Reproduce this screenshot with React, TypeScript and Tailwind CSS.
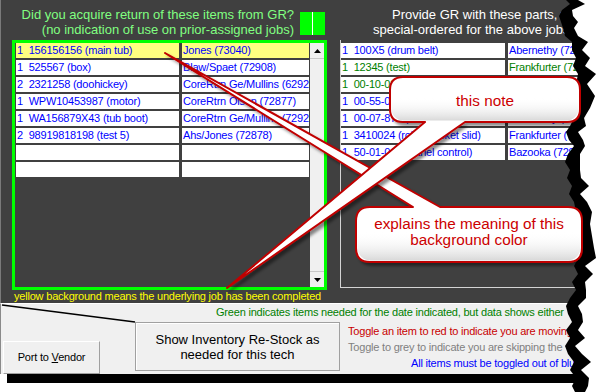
import React from "react";

const F = { fontFamily: '"Liberation Sans", Arial, sans-serif' };

type Row = { a: string; b: string; c?: string; y?: boolean };

const leftRows: Row[] = [
  { a: "1  156156156 (main tub)", b: "Jones (73040)", y: true },
  { a: "1  525567 (box)", b: "Blaw/Spaet (72908)" },
  { a: "2  2321258 (doohickey)", b: "CoreRtrn Ge/Mullins (62921)" },
  { a: "1  WPW10453987 (motor)", b: "CoreRtrn Olson (72877)" },
  { a: "1  WA156879X43 (tub boot)", b: "CoreRtrn Ge/Mullins (72921)" },
  { a: "2  98919818198 (test 5)", b: "Ahs/Jones (72878)" },
  { a: "", b: "" },
  { a: "", b: "" },
];

const BLUE = "text-[#0000ff]";
const GREEN = "text-[#008000]";

const rightRows: Row[] = [
  { a: "1  100X5 (drum belt)", b: "Abernethy (72915)", c: BLUE },
  { a: "1  12345 (test)", b: "Frankfurter (72880)", c: GREEN },
  { a: "1  00-10-022 (hinge)", b: "Frankfurter (72880)", c: GREEN },
  { a: "1  00-55-019 (spring)", b: "Abernethy (72915)", c: BLUE },
  { a: "1  00-07-875 (seal)", b: "Abernethy (72915)", c: BLUE },
  { a: "1  3410024 (roller basket slid)", b: "Frankfurter (72880)", c: BLUE },
  { a: "1  50-01-010 (panel control)", b: "Bazooka (72901)", c: BLUE },
];

const E: [number, number][] = [
  [566, 0], [570, 4], [562, 10], [559, 16], [561, 22], [563, 28], [565, 36], [572, 42],
  [572, 50], [576, 58], [573, 66], [578, 74], [576, 84], [580, 96], [577, 108], [574, 118],
  [570, 126], [566, 132], [569, 140], [574, 146], [568, 154], [565, 162], [570, 170],
  [567, 178], [572, 186], [569, 194], [574, 202], [576, 212], [580, 224], [578, 236],
  [582, 248], [578, 258], [574, 266], [578, 274], [572, 282], [576, 290], [570, 298],
  [566, 306], [568, 314], [572, 322], [566, 330], [570, 338], [565, 346], [568, 354],
  [574, 362], [570, 370], [576, 378], [572, 386], [575, 392],
];
const W = [12, 15, 10, 14, 17, 11, 13, 16, 10, 14, 12, 18, 11, 15, 13, 10, 16, 12, 14, 11];

const blackPath =
  "M " + E.map(([x, y]) => `${x},${y}`).join(" L ") + " L 600,392 L 600,0 Z";
const whitePath =
  "M " +
  E.map(([x, y], i) => `${x + W[i % W.length]},${y}`).join(" L ") +
  " L 600,392 L 600,0 Z";

const c1 =
  "M 403,77 H 567 Q 580,77 580,90 V 109 Q 580,122 567,122 H 465 L 227,288 L 425,122 H 403 Q 390,122 390,109 V 90 Q 390,77 403,77 Z";
const c2 =
  "M 370,207 H 413 L 165,53 L 440,207 H 568 Q 582,207 582,221 V 248 Q 582,262 568,262 H 370 Q 356,262 356,248 V 221 Q 356,207 370,207 Z";

function Cell({ text, cls, yellow }: { text: string; cls: string; yellow?: boolean }) {
  return (
    <div
      className={
        (yellow ? "bg-[#ffff80] " : "bg-white ") +
        cls +
        " h-[15px] overflow-hidden whitespace-pre pl-[1px] text-[11px] leading-[15px] tracking-[-0.2px]"
      }
    >
      {text}
    </div>
  );
}

export default function App() {
  return (
    <div className="relative h-[392px] w-[600px] overflow-hidden bg-white" style={F}>
      <div className="flex h-[374px] w-[600px] flex-col">
        {/* dark panel */}
        <div className="flex h-[303px] border-l border-[#7a7a7a] bg-[#404040]">
          {/* left side */}
          <div className="flex w-[330px] shrink-0 flex-col">
            <div className="flex h-[40px] justify-end pr-[6px]">
              <div className="whitespace-nowrap pt-[7px] text-right text-[13px] leading-[15px] text-[#80ff80]">
                <div>Did you acquire return of these items from GR?</div>
                <div>(no indication of use on prior-assigned jobs)</div>
              </div>
              <div className="ml-[6px] mt-[12px] flex h-[23px] w-[25px]">
                <div className="w-[12px] bg-[#00ff00]" />
                <div className="w-[1px] bg-white" />
                <div className="w-[12px] bg-[#00ff00]" />
              </div>
            </div>
            <div className="ml-[11px] flex h-[250px] w-[315px] border-[3px] border-[#00ff00] pl-[1px]">
              <div className="grid w-[293px] grid-cols-[163px_127px] content-start gap-x-[3px] gap-y-[2px]">
                {leftRows.map((r, i) => (
                  <React.Fragment key={i}>
                    <Cell text={r.a} cls={BLUE} yellow={r.y} />
                    <Cell text={r.b} cls={BLUE} yellow={r.y} />
                  </React.Fragment>
                ))}
              </div>
              <div className="ml-[1px] flex w-[14px] flex-col bg-[#f0f0f0]">
                <div className="flex h-[16px] items-center justify-center border-b border-[#c8c8c8]">
                  <svg width="7" height="4" viewBox="0 0 7 4">
                    <polygon points="0,4 7,4 3.5,0" fill="#000" />
                  </svg>
                </div>
                <div className="flex-1" />
                <div className="flex h-[16px] items-center justify-center border-t border-[#c8c8c8]">
                  <svg width="7" height="4" viewBox="0 0 7 4">
                    <polygon points="0,0 7,0 3.5,4" fill="#000" />
                  </svg>
                </div>
              </div>
            </div>
            <div className="ml-[13px] whitespace-nowrap text-[11px] leading-[12px] tracking-[-0.2px] text-[#ffff00]">
              yellow background means the underlying job has been completed
            </div>
          </div>
          {/* right side */}
          <div className="flex min-w-0 flex-1 flex-col overflow-hidden">
            <div className="h-[40px] whitespace-nowrap pt-[7px] text-[13px] leading-[15px] text-white">
              <div className="pl-[61px]">Provide GR with these parts, which were</div>
              <div className="pl-[42px]">special-ordered for the above jobs</div>
            </div>
            <div className="ml-[9px] h-[248px] overflow-hidden border-b border-l border-[#d4d4d4] pt-[3px]">
              <div className="grid w-[300px] grid-cols-[164px_133px] content-start gap-x-[3px] gap-y-[2px]">
                {rightRows.map((r, i) => (
                  <React.Fragment key={i}>
                    <Cell text={r.a} cls={r.c || BLUE} />
                    <Cell text={r.b} cls={r.c || BLUE} />
                  </React.Fragment>
                ))}
              </div>
            </div>
          </div>
        </div>
        {/* light area */}
        <div className="flex flex-1 flex-col overflow-hidden border-l border-t border-l-[#8a8a8a] border-t-white bg-[#f0f0f0]">
          <div className="h-[15px] whitespace-nowrap pl-[215px] pt-[2px] text-[11px] leading-[13px] tracking-[-0.2px] text-[#008000]">
            Green indicates items needed for the date indicated, but data shows either
          </div>
          <div className="flex items-start">
            <div className="ml-[2px] mt-[22px] flex h-[33px] w-[97px] shrink-0 items-center justify-center border-b border-l border-r border-t border-b-[#a0a0a0] border-l-white border-r-[#a0a0a0] border-t-white text-[11px] tracking-[-0.2px] text-black">
              <span>
                Port to <span className="underline">V</span>endor
              </span>
            </div>
            <div className="ml-[35px] mt-[3px] flex h-[49px] w-[205px] shrink-0 flex-col items-center justify-center border border-[#a0a0a0] text-[13px] leading-[15px] text-black shadow-[inset_1px_1px_0_#ffffff]">
              <div>Show Inventory Re-Stock as</div>
              <div>needed for this tech</div>
            </div>
            <div className="ml-[8px] mt-[4px] whitespace-nowrap text-[11px] leading-[16px] tracking-[-0.2px]">
              <div className="text-[#c80000]">Toggle an item to red to indicate you are moving</div>
              <div className="text-[#808080]">Toggle to grey to indicate you are skipping the</div>
              <div className="pl-[63px] text-[#0000ff]">All items must be toggled out of blue</div>
            </div>
          </div>
        </div>
      </div>
      <div className="ml-[7px] h-[9px] w-[580px] bg-black" />

      {/* overlays */}
      <svg className="pointer-events-none absolute left-0 top-0" width="600" height="392" viewBox="0 0 600 392">
        <defs>
          <filter id="sh" x="-10%" y="-10%" width="130%" height="130%">
            <feDropShadow dx="3" dy="3" stdDeviation="1.8" floodColor="#000" floodOpacity="0.45" />
          </filter>
          <linearGradient id="g1" x1="0" y1="77" x2="0" y2="122" gradientUnits="userSpaceOnUse">
            <stop offset="0" stopColor="#ffffff" stopOpacity="0" />
            <stop offset="0.45" stopColor="#ffffff" stopOpacity="0" />
            <stop offset="1" stopColor="#d4d4d4" stopOpacity="1" />
          </linearGradient>
          <linearGradient id="g2" x1="0" y1="207" x2="0" y2="262" gradientUnits="userSpaceOnUse">
            <stop offset="0" stopColor="#ffffff" stopOpacity="0" />
            <stop offset="0.45" stopColor="#ffffff" stopOpacity="0" />
            <stop offset="1" stopColor="#d4d4d4" stopOpacity="1" />
          </linearGradient>
        </defs>
        <line x1="2" y1="305" x2="135" y2="322" stroke="#000" strokeWidth="1.6" />
        <path d={blackPath} fill="#000" />
        <path d={whitePath} fill="#fff" />

        <path d={c2} fill="#fff" stroke="#c00000" strokeWidth="2" strokeLinejoin="round" filter="url(#sh)" />
        <rect x="357.5" y="208.5" width="223" height="52" rx="13" fill="url(#g2)" />
        <text x="469" y="229" textAnchor="middle" fontFamily="Liberation Sans, Arial, sans-serif" fontSize="15.3" fill="#cc0000">
          explains the meaning of this
        </text>
        <text x="469" y="245" textAnchor="middle" fontFamily="Liberation Sans, Arial, sans-serif" fontSize="15.3" fill="#cc0000">
          background color
        </text>

        <path d={c1} fill="#fff" stroke="#c00000" strokeWidth="2" strokeLinejoin="round" filter="url(#sh)" />
        <rect x="391.5" y="78.5" width="187" height="42" rx="12" fill="url(#g1)" />
        <text x="485" y="106" textAnchor="middle" fontFamily="Liberation Sans, Arial, sans-serif" fontSize="15.3" fill="#cc0000">
          this note
        </text>
      </svg>
    </div>
  );
}
